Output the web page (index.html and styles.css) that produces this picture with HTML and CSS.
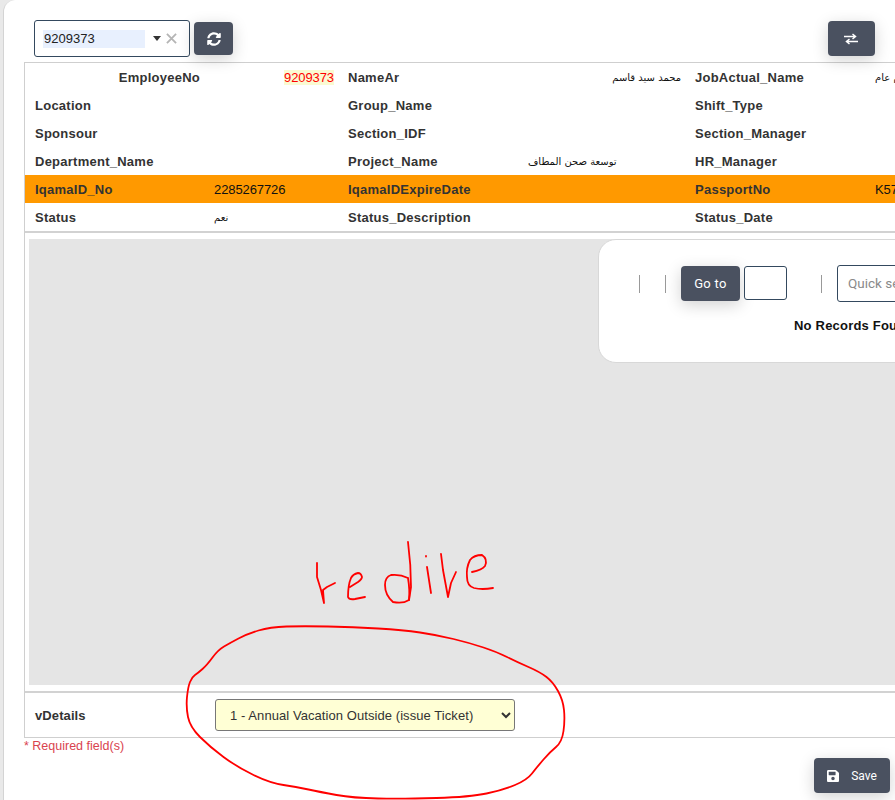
FILE: index.html
```html
<!DOCTYPE html>
<html lang="en">
  <head>
    <meta charset="UTF-8" />
    <title>Vacation Request</title>
    <link rel="stylesheet" href="styles.css">
  </head>
  <body>
    <div class="panel">
      <div class="toolbar">
        <div class="lookup">
          <span class="lookup-value">9209373</span>
          <span class="lookup-caret"></span>
          <svg class="lookup-clear" viewBox="0 0 12 12"><path d="M1 1L11 11M11 1L1 11" /></svg>
        </div>
        <button class="btn btn-icon" type="button">
          <svg viewBox="0 0 512 512" width="14" height="14"><path fill="#fff" d="M370.7 133.3C339.5 104 298.9 88 255.8 88c-77.5.1-144.3 53.2-162.8 126.9-1.3 5.4-6.1 9.1-11.6 9.1H24.1c-7.5 0-13.2-6.8-11.8-14.2C33.9 94.9 134.8 8 256 8c66.4 0 126.8 26.1 171.3 68.7L463 41c15.1-15.1 41-4.4 41 17v134c0 13.3-10.7 24-24 24H346c-21.4 0-32.1-25.9-17-41l41.7-41.7zM32 296h134c21.4 0 32.1 25.9 17 41l-41.7 41.7c31.2 29.3 71.8 45.3 114.9 45.3 77.4-.1 144.3-53.1 162.8-126.8 1.3-5.4 6.1-9.1 11.6-9.1h57.3c7.5 0 13.2 6.8 11.8 14.2C478.1 417.1 377.2 504 256 504c-66.4 0-126.8-26.1-171.3-68.7L49 471c-15.1 15.1-41 4.4-41-17V320c0-13.3 10.7-24 24-24z"/></svg>
        </button>
        <button class="btn btn-swap" type="button">
          <svg viewBox="0 0 14 12" width="14" height="12"><path d="M0 3.5H11M8.5 1L11.5 3.5L8.5 6M14 8.5H3M5.5 6L2.5 8.5L5.5 11" fill="none" stroke="#fff" stroke-width="1.5"/></svg>
        </button>
      </div>

      <div class="frame">
        <div class="info-wrap">
          <table class="info">
            <colgroup>
              <col class="c1"><col class="c2"><col class="c3"><col class="c4"><col class="c5"><col class="c6">
            </colgroup>
            <tr>
              <th class="to-right">EmployeeNo</th><td class="to-right"><span class="emp-no">9209373</span></td>
              <th>NameAr</th><td class="to-right ar" dir="rtl">محمد سيد قاسم</td>
              <th>JobActual_Name</th><td class="ar">خادم عام</td>
            </tr>
            <tr><th>Location</th><td></td><th>Group_Name</th><td></td><th>Shift_Type</th><td></td></tr>
            <tr><th>Sponsour</th><td></td><th>Section_IDF</th><td></td><th>Section_Manager</th><td></td></tr>
            <tr>
              <th>Department_Name</th><td></td>
              <th>Project_Name</th><td class="ar">توسعة صحن المطاف</td>
              <th>HR_Manager</th><td></td>
            </tr>
            <tr class="hilite">
              <th>IqamaID_No</th><td>2285267726</td>
              <th>IqamaIDExpireDate</th><td></td>
              <th>PassportNo</th><td>K5742210</td>
            </tr>
            <tr>
              <th>Status</th><td class="ar">نعم</td>
              <th>Status_Description</th><td></td>
              <th>Status_Date</th><td></td>
            </tr>
          </table>
        </div>

        <div class="grid-area">
          <div class="pager-card">
            <div class="pager-row">
              <span class="sep"></span>
              <span class="sep"></span>
              <button class="btn btn-goto" type="button">Go to</button>
              <input class="goto-input" type="text" />
              <span class="sep sep-last"></span>
              <input class="quick-search" type="text" placeholder="Quick search" />
            </div>
            <div class="no-records">No Records Found</div>
          </div>
        </div>

        <div class="details-row">
          <span class="details-label">vDetails</span>
          <select class="details-select">
            <option>1 - Annual Vacation Outside (issue Ticket)</option>
          </select>
        </div>
      </div>

      <div class="required">* Required field(s)</div>
      <div class="actions">
        <button class="btn btn-save" type="button">
          <svg viewBox="0 0 448 512" width="12" height="14"><path fill="#fff" d="M433.9 129.9l-83.9-83.9A48 48 0 0 0 316.1 32H48C21.5 32 0 53.5 0 80v352c0 26.5 21.5 48 48 48h352c26.5 0 48-21.5 48-48V163.9a48 48 0 0 0-14.1-34zM224 416c-35.3 0-64-28.7-64-64 0-35.3 28.7-64 64-64s64 28.7 64 64c0 35.3-28.7 64-64 64zm96-304.500V212c0 6.6-5.4 12-12 12H76c-6.6 0-12-5.4-12-12V108c0-6.6 5.4-12 12-12h228.500c3.2 0 6.2 1.3 8.5 3.500l3.500 3.500c2.2 2.2 3.500 5.3 3.500 8.500z"/></svg>
          <span>Save</span>
        </button>
      </div>
    </div>

    <!-- red pen marks on top of the page -->
    <svg class="scribble" viewBox="0 0 895 800" width="895" height="800">
      <path d="M317 563L317 577L321 590L324 603L323 590L327 587L335 583" />
      <path d="M350 587L358 582Q362 579 362 577Q361 573 358 573Q353 574 351 578Q348 585 348 597Q349 600 355 599L365 597" />
      <path d="M408 578Q400 574 391 575Q385 577 385 585Q385 595 393 602Q403 604 409 600Q410 590 408 578" />
      <path d="M408 542Q411 565 411 587L409 600" />
      <path d="M426 556L426 556.5M427 567L429 580L431 593" />
      <path d="M441 554L443 570L448 597L451 583L456 572" />
      <path d="M472 572Q482 570 485 566Q488 559 482 555Q474 555 470 560Q466 568 467 577Q467 586 474 588Q482 590 493 588" />
      <path d="M195 675Q198 673 202.5 669Q207 665 212.5 657.5Q218 650 224 646.5Q230 643 238.5 638.5Q247 634 258.5 630.5Q270 627 286.5 626.5Q303 626 328 626.5Q353 627 378 628.5Q403 630 420 632.5Q437 635 453.5 639Q470 643 483.5 647.5Q497 652 507 657Q517 662 528.5 667Q540 672 546.5 677Q553 682 558 691Q563 700 564 710Q565 720 563.5 731Q562 742 556 747Q550 752 543.5 759.5Q537 767 532 773.5Q527 780 515 785Q503 790 486.5 793.5Q470 797 436.5 798Q403 799 378 798.5Q353 798 336.5 795Q320 792 308.5 789.5Q297 787 283.5 785Q270 783 253.5 775Q237 767 223.5 757Q210 747 200 737Q190 727 188 717Q186 707 187 697Q188 687 190 682Q192 677 195 675" />
    </svg>
  </body>
</html>
```

FILE: styles.css
```css
* {
  box-sizing: border-box;
}
html,
body {
  margin: 0;
  height: 800px;
  overflow: hidden;
}
body {
  position: relative;
  background: #e9e9e9;
  font-family: "Liberation Sans", Arial, sans-serif;
  font-size: 13px;
  color: #333;
}
.panel {
  margin-left: 3px;
  width: 1100px;
  height: 800px;
  background: #fff;
  border-left: 1px solid #d4d4d4;
  border-top-left-radius: 12px;
  padding: 20px 0 0 20px;
}
.toolbar {
  display: flex;
  align-items: center;
  height: 37px;
  width: 851px;
  padding-left: 10px;
  margin-bottom: 5px;
}
.lookup {
  display: flex;
  align-items: center;
  width: 156px;
  height: 37px;
  border: 1px solid #34495e;
  border-radius: 3px;
  padding-left: 8px;
  background: #fff;
}
.lookup-value {
  width: 102px;
  height: 18px;
  line-height: 18px;
  padding-left: 1px;
  background: #e8f0fe;
  font-size: 13px;
  color: #222;
}
.lookup-caret {
  margin-left: 8px;
  border-left: 4px solid transparent;
  border-right: 4px solid transparent;
  border-top: 5px solid #333;
}
.lookup-clear {
  width: 11px;
  height: 11px;
  margin-left: 5px;
  fill: none;
  stroke: #b5b5b5;
  stroke-width: 2;
}
.btn {
  flex-shrink: 0;
  border: none;
  border-radius: 4px;
  background: #4a5160;
  color: #fff;
  font-family: inherit;
  box-shadow: 0 4px 16px rgba(0, 0, 0, 0.18);
  display: inline-flex;
  align-items: center;
  justify-content: center;
}
.btn-icon {
  width: 39px;
  height: 33px;
  margin-left: 4px;
}
.btn-swap {
  width: 47px;
  height: 35px;
  margin-left: auto;
  padding-right: 8px;
}
.frame {
  border: 1px solid #cfcfcf;
  border-right: none;
  width: 1000px;
  height: 676px;
}
.info-wrap {
  border-bottom: 2px solid #d2d2d2;
}
.info {
  border-collapse: collapse;
  table-layout: fixed;
  width: 1000px;
}
.c1 { width: 179px; }
.c2 { width: 134px; }
.c3 { width: 180px; }
.c4 { width: 167px; }
.c5 { width: 180px; }
.c6 { width: 160px; }
.info th,
.info td {
  height: 28px;
  padding: 0 10px;
  font-size: 13px;
  white-space: nowrap;
  overflow: hidden;
}
.info th {
  text-align: left;
  font-weight: bold;
  letter-spacing: 0.25px;
}
.info td {
  color: #111;
  letter-spacing: -0.1px;
}
.info .to-right {
  text-align: right;
  padding-right: 4px;
}
.info td.ar {
  font-family: "DejaVu Sans", sans-serif;
  font-size: 10px;
}
.emp-no {
  background: #fafad2;
  color: #f00;
}
.hilite {
  background: #ff9900;
}
.grid-area {
  margin: 6px 0 0 4px;
  height: 446px;
  background: #e5e5e5;
}
.pager-card {
  margin-left: 569px;
  width: 420px;
  height: 124px;
  background: #fff;
  border: 1px solid #d8d8d8;
  border-radius: 18px;
}
.pager-row {
  display: flex;
  align-items: center;
  padding: 26px 0 0 40px;
  height: 61px;
}
.sep {
  flex-shrink: 0;
  width: 1px;
  height: 18px;
  background: #999;
  margin-right: 25px;
}
.btn-goto {
  width: 59px;
  height: 35px;
  font-size: 13px;
  margin-left: -10px;
  letter-spacing: 0.3px;
  font-family: "Roboto", sans-serif;
}
.goto-input {
  flex-shrink: 0;
  width: 43px;
  height: 34px;
  margin: 0 0 1px 4px;
  border: 1px solid #34495e;
  border-radius: 3px;
}
.sep-last {
  margin-left: 34px;
  margin-right: 15px;
}
.quick-search {
  flex-shrink: 0;
  width: 200px;
  height: 37px;
  margin-bottom: 1px;
  border: 1px solid #34495e;
  border-radius: 3px;
  padding: 0 10px;
  font-family: "Roboto", sans-serif;
  font-size: 13.5px;
}
.quick-search::placeholder {
  color: #8a8a8a;
}
.no-records {
  margin-top: 17px;
  padding-left: 195px;
  font-weight: bold;
  font-size: 13px;
  color: #111;
  letter-spacing: 0.2px;
}
.details-row {
  display: flex;
  align-items: center;
  margin-top: 6px;
  height: 46px;
  border-top: 2px solid #d2d2d2;
  padding-left: 10px;
}
.details-label {
  width: 180px;
  font-weight: bold;
  letter-spacing: 0.1px;
}
.details-select {
  width: 300px;
  height: 32px;
  background-color: #ffffd5;
  border: 1px solid #777;
  border-radius: 3px;
  padding-left: 10px;
  font-family: "Liberation Sans", Arial, sans-serif;
  font-size: 13px;
  letter-spacing: 0.07px;
  color: #333;
}
.required {
  margin-top: 1px;
  color: #d9434e;
  font-size: 12.5px;
}
.actions {
  width: 866px;
  display: flex;
  justify-content: flex-end;
}
.btn-save {
  gap: 12px;
  width: 76px;
  height: 35px;
  margin-top: 5px;
  font-size: 12px;
  font-family: "Roboto", sans-serif;
}
.scribble {
  position: absolute;
  left: 0;
  top: 0;
  pointer-events: none;
}
.scribble path {
  fill: none;
  stroke: #f00;
  stroke-width: 1.8;
  stroke-linecap: round;
  stroke-linejoin: round;
}
```
